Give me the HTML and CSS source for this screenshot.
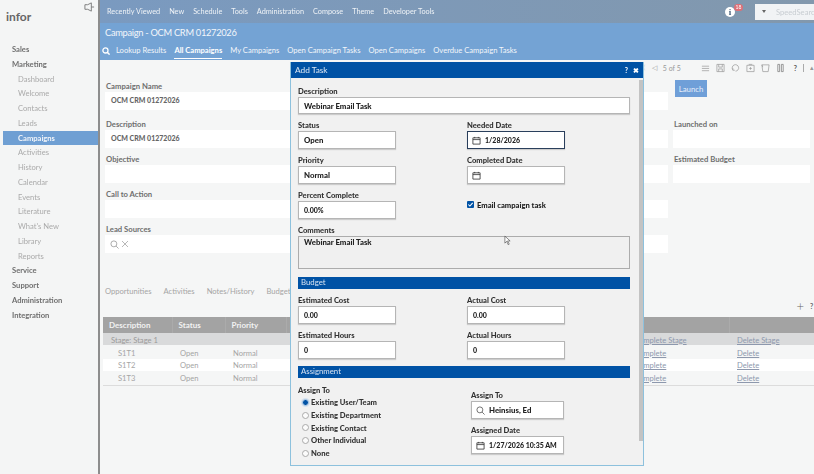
FILE: index.html
```html
<!DOCTYPE html>
<html lang="en">
<head>
<meta charset="utf-8">
<title>Campaign - OCM CRM 01272026</title>
<link rel="stylesheet" href="styles.css">
</head>
<body>
<svg class="defs" width="0" height="0" aria-hidden="true">
  <symbol id="cal" viewBox="0 0 10 10"><path d="M1 2h8v7H1zM1 4h8M3 1v1.500M7 1v1.500" fill="none" stroke="#333" stroke-width=".9"/></symbol>
  <symbol id="mag" viewBox="0 0 10 10"><circle cx="4.300" cy="4.300" r="3.300" fill="none" stroke="currentColor" stroke-width=".9"/><path d="M6.800 6.800 9.500 9.500" stroke="currentColor" stroke-width=".9"/></symbol>
  <symbol id="mag-bold" viewBox="0 0 10 10"><circle cx="4.300" cy="4.300" r="3.200" fill="none" stroke="currentColor" stroke-width="1.600"/><path d="M6.800 6.800 9.500 9.500" stroke="currentColor" stroke-width="1.800"/></symbol>
</svg>
<div class="app">
  <aside class="sidebar">
    <div class="brand-row">
      <span class="logo">infor</span>
      <svg class="pane-icon" viewBox="0 0 12 10"><path d="M1 2.500h3L8 .5v9L4 7.500H1zM8 5h3" fill="none" stroke="#777" stroke-width="1"/></svg>
    </div>
    <nav class="nav">
      <a class="nav-top">Sales</a>
      <a class="nav-top">Marketing</a>
      <a class="nav-sub">Dashboard</a>
      <a class="nav-sub">Welcome</a>
      <a class="nav-sub">Contacts</a>
      <a class="nav-sub">Leads</a>
      <a class="nav-sub nav-active">Campaigns</a>
      <a class="nav-sub">Activities</a>
      <a class="nav-sub">History</a>
      <a class="nav-sub">Calendar</a>
      <a class="nav-sub">Events</a>
      <a class="nav-sub">Literature</a>
      <a class="nav-sub">What's New</a>
      <a class="nav-sub">Library</a>
      <a class="nav-sub">Reports</a>
      <a class="nav-top">Service</a>
      <a class="nav-top">Support</a>
      <a class="nav-top">Administration</a>
      <a class="nav-top">Integration</a>
    </nav>
  </aside>
  <main class="main">
    <header class="topbar">
      <span>Recently Viewed</span><span>New</span><span>Schedule</span><span>Tools</span><span>Administration</span><span>Compose</span><span>Theme</span><span>Developer Tools</span>
      <div class="top-right">
        <div class="info"><span class="info-i">i</span><span class="info-badge">18</span></div>
        <div class="speed"><span class="speed-caret"></span><span class="speed-text">SpeedSearch</span></div>
      </div>
    </header>
    <section class="pagehead">
      <h1>Campaign - OCM CRM 01272026</h1>
      <div class="tabs">
        <svg class="tab-search"><use href="#mag-bold"/></svg>
        <span>Lookup Results</span><span class="tab-on">All Campaigns</span><span>My Campaigns</span><span>Open Campaign Tasks</span><span>Open Campaigns</span><span>Overdue Campaign Tasks</span>
      </div>
    </section>
    <section class="content">
      <div class="toolbar">
        <span class="pager">〈</span><span class="pager">◁</span><span class="pager-text">5 of 5</span>
        <svg class="tool" viewBox="0 0 10 10"><path d="M1 3h8M1 5.500h8M1 8h8" stroke="#999" fill="none" stroke-width=".8"/></svg>
        <svg class="tool" viewBox="0 0 10 10"><path d="M1 1h8v8H1zM3 1v3h4V1M3 9V6h4v3" stroke="#999" fill="none" stroke-width=".8"/></svg>
        <svg class="tool" viewBox="0 0 10 10"><path d="M2 7a3.600 3.600 0 1 1 3 1.500M2 5v2.500h2.200" stroke="#999" fill="none" stroke-width=".8"/></svg>
        <svg class="tool" viewBox="0 0 10 10"><path d="M1 2h8v7H1zM3 1h4M5 4v3M3.500 5.500h3" stroke="#999" fill="none" stroke-width=".8"/></svg>
        <svg class="tool" viewBox="0 0 10 10"><path d="M1 1.500h8L8 9H2zM1 1.500 2 4" stroke="#999" fill="none" stroke-width=".8"/></svg>
        <svg class="tool" viewBox="0 0 10 10"><path d="M2 1h2v8H2zM6 1h2v8H6z" stroke="#777" fill="none" stroke-width=".8"/></svg>
        <span class="tool-q">?</span><span class="tool-sep"></span><span class="tool-arrow">▴</span>
      </div>
      <div class="record">
        <div class="record-left">
          <div class="rec-field rec-first"><label>Campaign Name</label><div class="rec-value">OCM CRM 01272026</div></div>
          <div class="rec-field rec-second"><label>Description</label><div class="rec-value">OCM CRM 01272026</div></div>
          <div class="rec-field"><label>Objective</label><div class="rec-box"></div></div>
          <div class="rec-field"><label>Call to Action</label><div class="rec-box"></div></div>
          <div class="rec-field"><label>Lead Sources</label>
            <div class="rec-box rec-icons">
              <svg class="rec-search"><use href="#mag"/></svg>
              <svg class="rec-x" viewBox="0 0 8 8"><path d="M1 1l6 6M7 1 1 7" stroke="#999" stroke-width=".7"/></svg>
            </div>
          </div>
        </div>
        <div class="record-right">
          <button class="launch">Launch</button>
          <div class="rec-field rec-launched"><label>Launched on</label><div class="rec-box"></div></div>
          <div class="rec-field"><label>Estimated Budget</label><div class="rec-box"></div></div>
        </div>
      </div>
      <div class="subtabs"><span>Opportunities</span><span>Activities</span><span>Notes/History</span><span>Budget</span></div>
      <div class="grid-tools"><span class="plus">+</span><span class="grid-q">?</span></div>
      <table class="tasks">
        <colgroup><col class="c1"><col class="c2"><col class="c3"><col class="c4"><col class="c5"><col class="c6"></colgroup>
        <thead><tr><th>Description</th><th>Status</th><th>Priority</th><th></th><th></th><th></th></tr></thead>
        <tbody>
          <tr class="group"><td colspan="4">Stage: Stage 1</td><td><a>Complete Stage</a></td><td><a>Delete Stage</a></td></tr>
          <tr class="row row-one"><td>S1T1</td><td>Open</td><td>Normal</td><td></td><td><a>Complete</a></td><td><a>Delete</a></td></tr>
          <tr class="row row-white"><td>S1T2</td><td>Open</td><td>Normal</td><td></td><td><a>Complete</a></td><td><a>Delete</a></td></tr>
          <tr class="row row-last"><td>S1T3</td><td>Open</td><td>Normal</td><td></td><td><a>Complete</a></td><td><a>Delete</a></td></tr>
        </tbody>
      </table>
    </section>
  </main>
</div>

<div class="modal">
  <div class="modal-head"><span>Add Task</span><div class="modal-actions"><span>?</span><span>✖</span></div></div>
  <div class="modal-scroll"></div>
  <div class="modal-body">
    <div class="field"><label>Description</label><div class="inp inp-wide">Webinar Email Task</div></div>
    <div class="two">
      <div class="field"><label>Status</label><div class="inp">Open</div></div>
      <div class="field"><label>Needed Date</label><div class="inp inp-focus"><svg class="ic"><use href="#cal"/></svg><span class="num">1/28/2026</span></div></div>
      <div class="field"><label>Priority</label><div class="inp">Normal</div></div>
      <div class="field"><label>Completed Date</label><div class="inp"><svg class="ic"><use href="#cal"/></svg></div></div>
      <div class="field"><label>Percent Complete</label><div class="inp"><span class="num">0.00%</span></div></div>
      <div class="check-cell"><span class="check"><svg viewBox="0 0 8 8"><path d="M1.500 4 3.300 5.800 6.500 2.200" fill="none" stroke="#fff" stroke-width="1.200"/></svg></span><span>Email campaign task</span></div>
    </div>
    <div class="field field-comments"><label>Comments</label><div class="area">Webinar Email Task<svg class="cursor" viewBox="0 0 8 12"><path d="M1 1v8l2-2 2 4 1-1-2-3.500h3z" fill="#fff" stroke="#444" stroke-width=".7"/></svg></div></div>
    <div class="band band-budget">Budget</div>
    <div class="two two-budget">
      <div class="field"><label>Estimated Cost</label><div class="inp"><span class="num">0.00</span></div></div>
      <div class="field"><label>Actual Cost</label><div class="inp"><span class="num">0.00</span></div></div>
      <div class="field"><label>Estimated Hours</label><div class="inp"><span class="num">0</span></div></div>
      <div class="field"><label>Actual Hours</label><div class="inp"><span class="num">0</span></div></div>
    </div>
    <div class="band band-assign">Assignment</div>
    <div class="assign">
      <div class="assign-left">
        <label class="assign-label">Assign To</label>
        <div class="radio"><span class="dot dot-on"></span>Existing User/Team</div>
        <div class="radio"><span class="dot"></span>Existing Department</div>
        <div class="radio"><span class="dot"></span>Existing Contact</div>
        <div class="radio"><span class="dot"></span>Other Individual</div>
        <div class="radio"><span class="dot"></span>None</div>
      </div>
      <div class="assign-right">
        <div class="field"><label>Assign To</label><div class="inp inp-assign"><svg class="ic ic-mag"><use href="#mag"/></svg><span>Heinsius, Ed</span></div></div>
        <div class="field"><label>Assigned Date</label><div class="inp inp-assign"><svg class="ic"><use href="#cal"/></svg><span class="num">1/27/2026 10:35 AM</span></div></div>
      </div>
    </div>
  </div>
</div>
</body>
</html>
```

FILE: styles.css
```css
* { box-sizing: border-box; }
html, body { margin: 0; height: 100%; }
body {
  width: 814px; height: 474px; overflow: hidden; position: relative;
  font-family: Lato, "Open Sans", sans-serif; font-size: 8px; color: #333;
  background: #f5f6f6;
}
.defs { position: absolute; }
.app { display: flex; height: 474px; filter: blur(.25px); }

/* sidebar */
.sidebar { width: 100px; flex: none; background: #f4f5f5; border-right: 2px solid #8d8d8d; }
.brand-row { height: 42px; display: flex; justify-content: space-between; padding: 2px 3px 0 6px; }
.logo { font-size: 12px; font-weight: 700; color: #666; margin-top: 6px; line-height: 18px; }
.pane-icon { width: 11px; height: 10px; }
.nav { display: flex; flex-direction: column; }
.nav a { height: 14.750px; line-height: 14.750px; font-size: 7.600px; white-space: nowrap; }
.nav-top { padding-left: 12px; color: #6e6e6e; font-weight: 700; }
.nav-sub { padding-left: 18px; color: #aaa; }
.nav .nav-active { margin-left: 3px; padding-left: 15px; background: #6f9fd3; color: #f2f5fa; font-weight: 700; }

/* top */
.main { flex: 1; display: flex; flex-direction: column; min-width: 0; }
.topbar { height: 23px; flex: none; background: linear-gradient(90deg, #7a9ac0, #8298ad); color: #eef2f6; display: flex; align-items: center; padding-left: 7px; gap: 9px; font-size: 7.300px; white-space: nowrap; }
.top-right { margin-left: auto; display: flex; align-items: center; }
.info { position: relative; width: 30px; height: 12px; }
.info-i { position: absolute; left: 0; top: 1px; width: 10px; height: 10px; border-radius: 50%; background: #fff; color: #46607a; font: 700 9px/10px "Liberation Serif", serif; text-align: center; }
.info-badge { position: absolute; left: 9px; top: -2px; width: 9px; height: 7px; border-radius: 4px; background: #dd6f77; color: #fff; font-size: 5px; line-height: 7px; text-align: center; }
.speed { width: 59px; height: 16px; background: #f1f3f5; display: flex; align-items: center; padding-left: 7px; overflow: hidden; }
.speed-caret { border: 2.500px solid transparent; border-top: 3px solid #666; border-bottom: 0; margin-right: 10px; flex: none; }
.speed-text { color: #c8cdd2; font-size: 7.600px; }
.pagehead { height: 37px; flex: none; background: #74a3d4; color: #f3f6fa; padding: 3px 0 0 5px; }
.pagehead h1 { margin: 0; font-size: 9.300px; font-weight: 400; line-height: 14px; letter-spacing: -.3px; }
.tabs { display: flex; align-items: center; gap: 8px; margin: 5px 0 0 -3px; font-size: 7.600px; line-height: 11px; white-space: nowrap; }
.tab-search { width: 8px; height: 8px; color: #fff; margin-right: -2px; }
.tab-on { font-weight: 700; color: #fff; border-bottom: 1px solid #fff; padding-bottom: 2px; margin-bottom: -3px; }

/* content */
.content { flex: 1; position: relative; background: #f5f6f6; padding-left: 5px; min-height: 0; overflow: hidden; }
.toolbar { height: 15px; display: flex; align-items: center; justify-content: flex-end; gap: 6px; color: #999; font-size: 7px; white-space: nowrap; }
.pager { font-size: 7px; }
.pager-text { margin-right: 14px; }
.tool { width: 9px; height: 10px; }
.tool-q { font-weight: 700; color: #555; margin-left: 3px; }
.tool-sep { width: 1px; height: 8px; background: #aaa; }
.tool-arrow { width: 4px; overflow: hidden; }
.record { display: flex; gap: 5px; padding-right: 4px; }
.record-left { width: 563px; padding-top: 5px; }
.record-right { width: 137px; padding-top: 5px; }
.rec-field label { display: block; font-size: 7.700px; font-weight: 700; color: #6e6e6e; line-height: 12px; padding-left: 1px; }
.rec-field { margin-top: 5px; }
.rec-first { margin-top: 0; }
.rec-second { margin-top: 8px; }
.rec-value { height: 18px; line-height: 16px; background: #fff; padding-left: 6px; font-weight: 900; color: #666; font-size: 7px; }
.rec-box { height: 18px; background: #fff; }
.rec-icons { display: flex; align-items: center; padding-left: 5px; gap: 2px; }
.rec-search { width: 9px; height: 9px; color: #999; }
.rec-x { width: 8px; height: 8px; }
.launch { display: block; width: 32px; height: 17px; margin: 0 0 0 2px; border: 0; background: #6f9fd8; color: #e6eefa; font: 7.800px Lato, sans-serif; padding: 0; }
.rec-launched { margin-top: 21px; }
.subtabs { display: flex; gap: 12px; margin-top: 32px; color: #a5a5a5; font-size: 7.600px; line-height: 12px; white-space: nowrap; }
.grid-tools { display: flex; justify-content: flex-end; align-items: center; height: 14px; margin-top: 2px; gap: 6px; padding-right: 0; color: #666; }
.plus { font-size: 13px; font-weight: 300; line-height: 14px; }
.grid-q { font-weight: 700; font-size: 7px; width: 4px; overflow: hidden; }
.tasks { margin-left: -2px; margin-top: 4px; width: 711px; table-layout: fixed; border-collapse: collapse; font-size: 7.600px; }
.c1 { width: 69px; } .c2 { width: 53px; } .c3 { width: 61px; } .c4 { width: 340px; } .c5 { width: 103px; } .c6 { width: 85px; }
.tasks th { height: 16px; background: #a3a3a3; color: #f2f2f2; text-align: left; font-weight: 700; font-size: 8px; padding: 0 0 0 6px; border-right: 1px solid #ababab; }
.group td { height: 12px; background: #d9dadb; color: #999; padding: 1px 0 0 8px; }
.row td { height: 12px; padding: 0 0 0 8px; color: #a5a5a5; }
.row td:first-child { padding-left: 15px; }
.row-one td { height: 14px; padding-top: 1px; }
.row-last td { height: 14px; border-bottom: 1px solid #dcdcdc; }
.row-white td { background: #fff; }
.tasks a { color: #8d98ad; text-decoration: underline; }

/* modal */
.modal { position: absolute; left: 290px; top: 62px; width: 354px; height: 404px; background: #f1f1f1; border: 1px solid #8dc1dd; border-top: 0; color: #222; filter: blur(.25px); }
.modal-head { height: 16px; background: #0052a5; color: #dce7f3; display: flex; justify-content: space-between; align-items: center; padding: 0 4px 0 4px; font-size: 8.300px; }
.modal-actions { display: flex; gap: 5px; font-weight: 700; color: #fff; font-size: 7px; }
.modal-scroll { position: absolute; right: 0; top: 18px; width: 4px; height: 361px; background: #c3c3c3; }
.modal-body { padding: 8px 0 0 7px; width: 339px; }
.modal-body label { display: block; font-weight: 900; font-size: 7.600px; line-height: 11px; color: #333; }
.inp { width: 98px; height: 18px; background: #fff; border: 1px solid #b5b5b5; box-shadow: 0 1px 1px #ccc; display: flex; align-items: center; padding-left: 5px; font-weight: 900; font-size: 7.800px; color: #222; white-space: nowrap; }
.inp-wide { width: 332px; height: 17px; }
.inp-focus { border-color: #2a3f5c; }
.num { font-size: 7px; }
.ic { width: 9px; height: 9px; flex: none; margin: 0 4px 0 -1px; }
.ic-mag { color: #555; }
.two { display: grid; grid-template-columns: 169px 99px; row-gap: 6px; margin-top: 6px; }
.check-cell { display: flex; align-items: center; gap: 3px; font-weight: 900; font-size: 7.600px; }
.check { width: 7px; height: 7px; background: #0052a5; border-radius: 1px; display: block; }
.check svg { display: block; width: 7px; height: 7px; }
.field-comments { margin-top: 6px; }
.area { position: relative; width: 332px; height: 33px; background: #f0f0f0; border: 1px solid #acacac; padding: 0 0 0 5px; font-weight: 900; font-size: 7.800px; line-height: 11px; color: #222; }
.cursor { position: absolute; left: 205px; top: -2px; width: 7px; height: 11px; }
.band { width: 332px; height: 12px; background: #0052a5; color: #d7e3f2; font-size: 7.800px; line-height: 11px; padding-left: 3px; }
.band-budget { margin-top: 8px; }
.two-budget { margin-top: 6px; }
.band-assign { margin-top: 7px; }
.assign { display: flex; margin-top: 6px; }
.assign-left { width: 173px; }
.modal-body .assign-label { line-height: 12px; }
.radio { display: flex; align-items: center; height: 12.700px; font-weight: 900; font-size: 7.600px; color: #333; padding-left: 4px; gap: 2px; white-space: nowrap; }
.dot { width: 7px; height: 7px; border-radius: 50%; background: #fbfbfb; border: 1px solid #aaa; flex: none; }
.dot-on { background: #0052a5; border-color: #bcd3ea; box-shadow: 0 0 0 1px #d5e2ef; }
.assign-right { padding-top: 6px; }
.assign-right .field + .field { margin-top: 6px; }
.inp-assign { width: 93px; }
```
